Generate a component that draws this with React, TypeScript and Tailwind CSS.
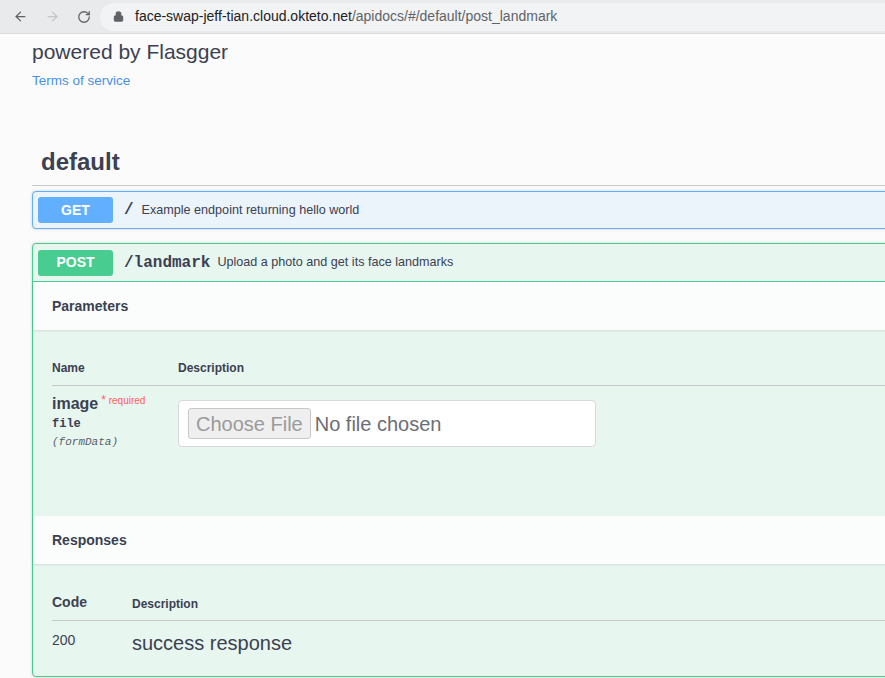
import { ArrowLeft, ArrowRight, RotateCw, Lock } from 'lucide-react'

const sans = "font-['Liberation_Sans',Arial,sans-serif]"
const mono = "font-['Liberation_Mono','Courier_New',monospace]"

function BrowserBar() {
  return (
    <div className="h-[34px] bg-[#e9eaeb] border-b border-[#dcdcdc] flex items-center">
      <div className="flex items-center w-[100px] pl-[13px] gap-[17px] text-[#5f6368]">
        <ArrowLeft className="w-[15px] h-[15px]" strokeWidth={2} />
        <ArrowRight className="w-[15px] h-[15px] text-[#c2c4c6]" strokeWidth={2} />
        <RotateCw className="w-[14px] h-[14px]" strokeWidth={2.2} />
      </div>
      <div className="flex-1 h-[28px] bg-[#f1f3f4] rounded-l-full flex items-center pl-[13px]">
        <Lock className="w-[11px] h-[11px] text-[#5f6368] fill-[#5f6368]" strokeWidth={2.5} />
        <span className={`${sans} ml-[11px] text-[14px] text-[#5f6368]`}>
          <span className="text-[#202124]">face-swap-jeff-tian.cloud.okteto.net</span>/apidocs/#/default/post_landmark
        </span>
      </div>
    </div>
  )
}

function SectionHeader({ title }: { title: string }) {
  return (
    <div className="h-[48px] bg-white/80 flex items-center px-[19px] shadow-[0_1px_2px_rgba(0,0,0,0.1)]">
      <h4 className="text-[14px] font-bold text-[#3b4151]">{title}</h4>
    </div>
  )
}

export default function App() {
  return (
    <div className={`${sans} w-[885px] h-[678px] overflow-hidden bg-[#fbfbfb] text-[#3b4151]`}>
      <BrowserBar />
      <div className="w-[1100px] pl-[32px]">
        <div className="pt-[4px] text-[21px] leading-[28px] text-[#3b4151]">powered by Flasgger</div>
        <div className="mt-[5px] text-[13.5px] text-[#4990e2]">Terms of service</div>

        <h3 className="mt-[53px] pl-[9px] pb-[5px] text-[24px] font-bold text-[#3b4151] border-b border-[#c5c8cc]">
          default
        </h3>

        {/* GET */}
        <div className="mt-[5px] h-[38px] border border-[#61affe] bg-[#ebf3fb] rounded-[4px] flex items-center px-[5px] shadow-[0_0_3px_rgba(0,0,0,0.19)]">
          <span className="w-[75px] h-[26px] rounded-[3px] bg-[#61affe] text-white text-[14px] font-bold flex items-center justify-center">
            GET
          </span>
          <span className={`${mono} ml-[11px] text-[16px] font-bold`}>/</span>
          <span className="ml-[8px] text-[12.6px]">Example endpoint returning hello world</span>
        </div>

        {/* POST */}
        <div className="mt-[14px] border border-[#49cc90] bg-[#e8f6f0] rounded-[4px] shadow-[0_0_3px_rgba(0,0,0,0.19)]">
          <div className="h-[38px] flex items-center px-[5px] border-b border-[#49cc90]">
            <span className="w-[75px] h-[26px] rounded-[3px] bg-[#49cc90] text-white text-[14px] font-bold flex items-center justify-center">
              POST
            </span>
            <span className={`${mono} ml-[11px] text-[16px] font-bold`}>/landmark</span>
            <span className="ml-[7px] text-[12.6px]">Upload a photo and get its face landmarks</span>
          </div>

          <SectionHeader title="Parameters" />
          <div className="px-[19px] pt-[29px] h-[186px]">
            <div className="w-[840px] flex text-[12px] font-bold border-b border-[#c5c8cc] pb-[8px]">
              <span className="w-[126px]">Name</span>
              <span>Description</span>
            </div>
            <div className="flex pt-[8px]">
              <div className="w-[126px]">
                <div className="flex items-start">
                  <span className="text-[16px] font-bold leading-[20px]">image</span>
                  <span className="ml-[3px] text-[10px] text-[#ff6060] leading-[12px]">
                    <span className="text-[12px]">*</span> required
                  </span>
                </div>
                <div className={`${mono} text-[12px] font-bold mt-[1px]`}>file</div>
                <div className={`${mono} text-[11px] italic text-[#5a5e66] mt-[1px]`}>(formData)</div>
              </div>
              <div className="mt-[6px] w-[418px] h-[47px] bg-white border border-[#d9d9d9] rounded-[4px] flex items-center px-[9px]">
                <span className="h-[31px] px-[7px] bg-[#efefef] border border-[#c8c8c8] rounded-[3px] text-[20px] text-[#9a9a9a] flex items-center">
                  Choose File
                </span>
                <span className="ml-[4px] text-[20px] text-[#6b6e75]">No file chosen</span>
              </div>
            </div>
          </div>

          <SectionHeader title="Responses" />
          <div className="px-[19px] pt-[28px] pb-[20px]">
            <div className="w-[840px] flex items-end border-b border-[#c5c8cc] pb-[7px]">
              <span className="w-[80px] text-[14px] font-bold">Code</span>
              <span className="text-[12px] font-bold">Description</span>
            </div>
            <div className="flex items-start pt-[9px]">
              <span className="w-[80px] text-[14px]">200</span>
              <span className="text-[20px] leading-[26px]">success response</span>
            </div>
          </div>
        </div>
      </div>
    </div>
  )
}
